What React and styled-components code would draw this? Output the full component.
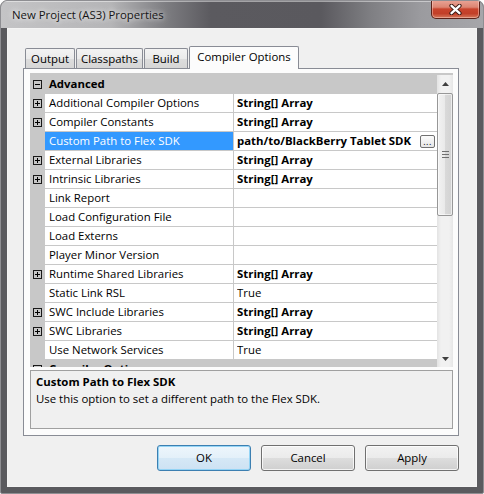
import React from "react";
import styled, { createGlobalStyle } from "styled-components";

const FONT = `"Open Sans", "Noto Sans", "DejaVu Sans", sans-serif`;
const LINE = "#c8c8c8";

const GlobalStyle = createGlobalStyle`
  html, body { margin: 0; padding: 0; background: #ffffff; }
  body { width: 484px; height: 494px; overflow: hidden; font-family: ${FONT}; }
  * { box-sizing: border-box; }
`;

const Window = styled.div`
  width: 484px;
  height: 494px;
  border: 1px solid #8e8e92;
  border-radius: 7px 7px 2px 2px;
  background: #5a5a5e;
  display: flex;
  flex-direction: column;
  overflow: hidden;
  font-family: ${FONT};
  font-size: 11.4px;
  color: #000;
`;

const TitleBar = styled.div`
  height: 27px;
  flex: none;
  display: flex;
  align-items: flex-start;
  padding-left: 11px;
  background: linear-gradient(
    90deg,
    #c4c4c6 0px,
    #b5b5b7 110px,
    #7d7d81 165px,
    #5b5a5f 210px,
    #5a595e 320px,
    #7f7f83 370px,
    #9b9b9f 420px,
    #a6a6aa 482px
  );
  box-shadow: inset 0 1px 0 rgba(255, 255, 255, 0.45);
`;

const TitleText = styled.div`
  margin-top: 6px;
  line-height: 16px;
  color: #151515;
  white-space: nowrap;
  text-shadow: 0 0 5px rgba(255, 255, 255, 0.9), 0 0 10px rgba(255, 255, 255, 0.6);
`;

const CloseButton = styled.div`
  margin-left: auto;
  margin-right: 3px;
  width: 49px;
  height: 19px;
  margin-top: -1px;
  border: 1px solid #5b2219;
  border-top: none;
  border-radius: 0 0 5px 5px;
  background: linear-gradient(#eaa597 0%, #dc8572 40%, #c9442d 50%, #c23f28 75%, #d4785b 100%);
  box-shadow: inset 0 0 0 1px rgba(255, 220, 210, 0.45);
  display: flex;
  align-items: center;
  justify-content: center;
`;

const Body = styled.div`
  flex: 1;
  display: flex;
  padding: 0 6px 6px;
`;

const Client = styled.div`
  flex: 1;
  display: flex;
  flex-direction: column;
  border: 1px solid #f4f4f4;
  background: #f0f0f0;
  padding: 17px 17px 15px 15px;
`;

const TabStrip = styled.div`
  flex: none;
  height: 22px;
  display: flex;
  align-items: flex-end;
  gap: 1px;
  padding-left: 2px;
  position: relative;
  z-index: 1;
`;

const Tab = styled.div`
  width: ${(p) => p.$w}px;
  height: ${(p) => (p.$active ? 23 : 20)}px;
  margin-bottom: ${(p) => (p.$active ? -1 : 0)}px;
  border: 1px solid #898c95;
  border-bottom: none;
  border-radius: 2px 2px 0 0;
  background: ${(p) =>
    p.$active
      ? "#fcfcfc"
      : "linear-gradient(#f3f3f3 0%, #ebebeb 50%, #dddddd 51%, #d6d6d6 100%)"};
  text-align: center;
  line-height: 19px;
  white-space: nowrap;
`;

const Panel = styled.div`
  flex: none;
  height: 368px;
  border: 1px solid #898c95;
  background: #fcfcfc;
  padding: 4px 5px 6px 6px;
  display: flex;
  flex-direction: column;
  gap: 3px;
`;

const Grid = styled.div`
  flex: none;
  height: 294px;
  display: flex;
  background: #ffffff;
  border-top: 2px solid ${LINE};
`;

const Rows = styled.div`
  flex: 1;
  overflow: hidden;
  display: flex;
  flex-direction: column;
`;

const Row = styled.div`
  flex: none;
  height: 19px;
  display: flex;
`;

const CategoryRow = styled.div`
  flex: none;
  height: 19px;
  display: flex;
  align-items: center;
  background: ${LINE};
  padding-left: 3px;
  padding-bottom: 1px;
  font-weight: 700;
  line-height: 18px;
  gap: 7px;
`;

const Gutter = styled.div`
  width: 15px;
  flex: none;
  background: ${LINE};
  display: flex;
  align-items: center;
  padding-left: 3px;
  padding-bottom: 1px;
`;

const NameCell = styled.div`
  width: 189px;
  flex: none;
  border-right: 1px solid ${LINE};
  border-bottom: 1px solid ${LINE};
  padding-left: 4px;
  line-height: 18px;
  white-space: nowrap;
  overflow: hidden;
  background: ${(p) => (p.$selected ? "#3399ff" : "#ffffff")};
  color: ${(p) => (p.$selected ? "#ffffff" : "#000000")};
`;

const ValueCell = styled.div`
  flex: 1;
  min-width: 0;
  display: flex;
  align-items: center;
  border-bottom: 1px solid ${LINE};
  padding-left: 3px;
  line-height: 18px;
  white-space: nowrap;
  font-weight: ${(p) => (p.$bold ? 700 : 400)};
`;

const ValueText = styled.span`
  flex: 1;
  overflow: hidden;
`;

const EllipsisButton = styled.div`
  flex: none;
  width: 15px;
  height: 13px;
  margin-right: 2px;
  border: 1px solid #707070;
  border-radius: 2px;
  background: linear-gradient(#fbfbfb, #e6e6e6);
  font-size: 9px;
  font-weight: 400;
  line-height: 9px;
  text-align: center;
  letter-spacing: 0.5px;
  padding-top: 1px;
`;

const Scrollbar = styled.div`
  width: 16px;
  flex: none;
  display: flex;
  flex-direction: column;
  background: linear-gradient(90deg, #e3e3e3 0%, #f1f1f1 25%, #f1f1f1 75%, #e6e6e6 100%);
`;

const ArrowButton = styled.div`
  flex: none;
  height: 17px;
  display: flex;
  align-items: center;
  justify-content: center;
`;

const Thumb = styled.div`
  flex: none;
  height: 123px;
  margin-top: 1px;
  border: 1px solid #979797;
  border-radius: 2px;
  background: linear-gradient(90deg, #f2f2f2 0%, #e9e9e9 50%, #d9d9d9 51%, #d2d2d2 100%);
  box-shadow: inset 0 0 0 1px rgba(255, 255, 255, 0.6);
  display: flex;
  align-items: center;
  justify-content: center;
`;

const Track = styled.div`
  flex: 1;
`;

const Description = styled.div`
  flex: none;
  height: 59px;
  border: 1px solid #a0a0a0;
  background: #f0f0f0;
  padding: 2px 5px;
  line-height: 17px;
`;

const DescTitle = styled.div`
  font-weight: 700;
`;

const ButtonRow = styled.div`
  flex: none;
  margin-top: 9px;
  display: flex;
  justify-content: flex-end;
  gap: 10px;
`;

const Button = styled.div`
  width: 94px;
  height: 26px;
  border: 1px solid ${(p) => (p.$default ? "#3c7fb1" : "#707070")};
  border-radius: 3px;
  background: ${(p) =>
    p.$default
      ? "linear-gradient(#edf6fc 0%, #e3f0f9 50%, #d5e8f6 51%, #cde2f3 100%)"
      : "linear-gradient(#f2f2f2 0%, #ebebeb 50%, #dddddd 51%, #cfcfcf 100%)"};
  box-shadow: inset 0 0 0 1px
    ${(p) => (p.$default ? "rgba(140, 210, 245, 0.9)" : "rgba(255, 255, 255, 0.75)")};
  display: flex;
  align-items: center;
  justify-content: center;
  line-height: 16px;
`;

const ExpandBox = ({ open }) => (
  <svg width="9" height="9" viewBox="0 0 9 9" shapeRendering="crispEdges">
    <rect x="0.5" y="0.5" width="8" height="8" fill="none" stroke="#1a1a1a" />
    <path d="M2 4.5h5" stroke="#000" />
    {!open && <path d="M4.5 2v5" stroke="#000" />}
  </svg>
);

const CloseGlyph = () => (
  <svg width="13" height="11" viewBox="0 0 13 11">
    <path d="M2.5 1.8 L10.5 9.2 M10.5 1.8 L2.5 9.2" stroke="#3a1a14" strokeWidth="4.2" strokeLinecap="round" />
    <path d="M2.5 1.8 L10.5 9.2 M10.5 1.8 L2.5 9.2" stroke="#ffffff" strokeWidth="2.3" strokeLinecap="round" />
  </svg>
);

const UpArrow = () => (
  <svg width="7" height="4" viewBox="0 0 7 4">
    <path d="M0 4 L3.5 0 L7 4 Z" fill="#3f3f3f" />
  </svg>
);

const DownArrow = () => (
  <svg width="7" height="4" viewBox="0 0 7 4">
    <path d="M0 0 L3.5 4 L7 0 Z" fill="#3f3f3f" />
  </svg>
);

const Grip = () => (
  <svg width="7" height="7" viewBox="0 0 7 7" shapeRendering="crispEdges">
    <path d="M0 0.5h7M0 3.5h7M0 6.5h7" stroke="#6f6f6f" />
  </svg>
);

const ARR = "String[] Array";

const properties = [
  { name: "Additional Compiler Options", value: ARR, expandable: true, bold: true },
  { name: "Compiler Constants", value: ARR, expandable: true, bold: true },
  {
    name: "Custom Path to Flex SDK",
    value: "path/to/BlackBerry Tablet SDK",
    bold: true,
    selected: true,
    editor: true,
  },
  { name: "External Libraries", value: ARR, expandable: true, bold: true },
  { name: "Intrinsic Libraries", value: ARR, expandable: true, bold: true },
  { name: "Link Report", value: "" },
  { name: "Load Configuration File", value: "" },
  { name: "Load Externs", value: "" },
  { name: "Player Minor Version", value: "" },
  { name: "Runtime Shared Libraries", value: ARR, expandable: true, bold: true },
  { name: "Static Link RSL", value: "True" },
  { name: "SWC Include Libraries", value: ARR, expandable: true, bold: true },
  { name: "SWC Libraries", value: ARR, expandable: true, bold: true },
  { name: "Use Network Services", value: "True" },
];

const tabs = [
  { label: "Output", w: 50 },
  { label: "Classpaths", w: 67 },
  { label: "Build", w: 44 },
  { label: "Compiler Options", w: 110, active: true },
];

export default function App() {
  return (
    <>
      <GlobalStyle />
      <Window>
        <TitleBar>
          <TitleText>New Project (AS3) Properties</TitleText>
          <CloseButton>
            <CloseGlyph />
          </CloseButton>
        </TitleBar>
        <Body>
          <Client>
            <TabStrip>
              {tabs.map((t) => (
                <Tab key={t.label} $w={t.w} $active={t.active}>
                  {t.label}
                </Tab>
              ))}
            </TabStrip>
            <Panel>
              <Grid>
                <Rows>
                  <CategoryRow>
                    <ExpandBox open />
                    <span>Advanced</span>
                  </CategoryRow>
                  {properties.map((p) => (
                    <Row key={p.name}>
                      <Gutter>{p.expandable && <ExpandBox />}</Gutter>
                      <NameCell $selected={p.selected}>{p.name}</NameCell>
                      <ValueCell $bold={p.bold}>
                        <ValueText>{p.value}</ValueText>
                        {p.editor && <EllipsisButton>...</EllipsisButton>}
                      </ValueCell>
                    </Row>
                  ))}
                  <CategoryRow>
                    <ExpandBox open />
                    <span>Compiler Options</span>
                  </CategoryRow>
                </Rows>
                <Scrollbar>
                  <ArrowButton>
                    <UpArrow />
                  </ArrowButton>
                  <Thumb>
                    <Grip />
                  </Thumb>
                  <Track />
                  <ArrowButton>
                    <DownArrow />
                  </ArrowButton>
                </Scrollbar>
              </Grid>
              <Description>
                <DescTitle>Custom Path to Flex SDK</DescTitle>
                <div>Use this option to set a different path to the Flex SDK.</div>
              </Description>
            </Panel>
            <ButtonRow>
              <Button $default>OK</Button>
              <Button>Cancel</Button>
              <Button>Apply</Button>
            </ButtonRow>
          </Client>
        </Body>
      </Window>
    </>
  );
}
